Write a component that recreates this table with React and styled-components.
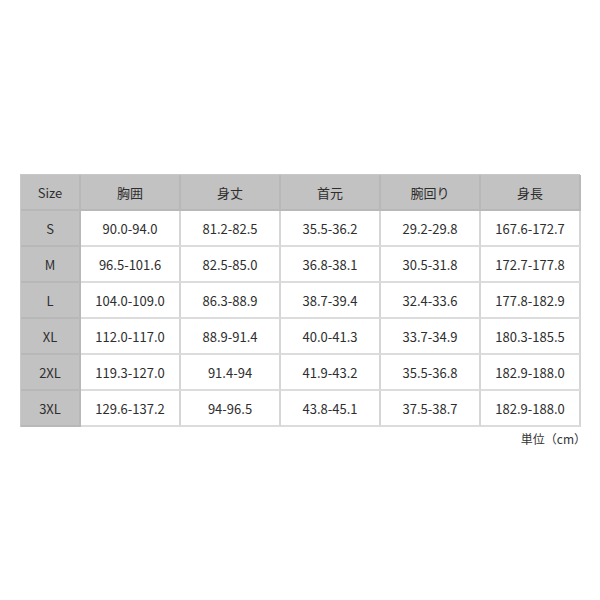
import React from 'react';
import styled, { createGlobalStyle } from 'styled-components';

const GlobalStyle = createGlobalStyle`
  html, body {
    margin: 0;
    padding: 0;
    background: #fff;
  }
  body {
    font-family: "Noto Sans CJK JP", "Noto Sans", sans-serif;
    color: #333;
  }
`;

const headers = ['Size', '胸囲', '身丈', '首元', '腕回り', '身長'];

const rows = [
  ['S', '90.0-94.0', '81.2-82.5', '35.5-36.2', '29.2-29.8', '167.6-172.7'],
  ['M', '96.5-101.6', '82.5-85.0', '36.8-38.1', '30.5-31.8', '172.7-177.8'],
  ['L', '104.0-109.0', '86.3-88.9', '38.7-39.4', '32.4-33.6', '177.8-182.9'],
  ['XL', '112.0-117.0', '88.9-91.4', '40.0-41.3', '33.7-34.9', '180.3-185.5'],
  ['2XL', '119.3-127.0', '91.4-94', '41.9-43.2', '35.5-36.8', '182.9-188.0'],
  ['3XL', '129.6-137.2', '94-96.5', '43.8-45.1', '37.5-38.7', '182.9-188.0'],
];

const Page = styled.div`
  width: 600px;
  height: 600px;
  padding: 174px 20px 0;
  box-sizing: border-box;
  display: flex;
  flex-direction: column;
`;

const Grid = styled.div`
  display: grid;
  grid-template-columns: 60px repeat(5, 100px);
  grid-auto-rows: 36px;
  border-top: 1px solid #c8c8c8;
  border-left: 1px solid #c8c8c8;
`;

const Cell = styled.div`
  display: flex;
  align-items: center;
  justify-content: center;
  box-sizing: border-box;
  font-size: 13px;
  color: #2e2e2e;
  background: ${(p) => (p.$shaded ? '#c2c2c2' : '#fff')};
  border-right: 2px solid ${(p) => (p.$shaded ? '#b8b8b8' : '#d6d6d6')};
  border-bottom: 2px solid ${(p) => (p.$shaded ? '#b8b8b8' : '#dcdcdc')};
`;

const Unit = styled.div`
  align-self: flex-end;
  margin-top: 3px;
  margin-right: -6px;
  font-size: 12px;
  color: #333;
`;

const App = () => (
  <>
    <GlobalStyle />
    <Page>
      <Grid>
        {headers.map((h) => (
          <Cell key={h} $shaded>{h}</Cell>
        ))}
        {rows.map((r) =>
          r.map((v, i) => (
            <Cell key={r[0] + i} $shaded={i === 0}>{v}</Cell>
          ))
        )}
      </Grid>
      <Unit>単位（cm）</Unit>
    </Page>
  </>
);

export default App;
